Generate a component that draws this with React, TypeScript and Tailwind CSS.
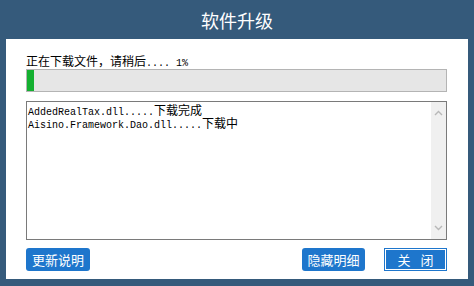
import React from 'react';

const cjk = '"Noto Sans CJK SC", "Liberation Sans", sans-serif';
const mono = '"Liberation Mono", monospace';

function Chevron({ up }: { up?: boolean }) {
  return (
    <svg width="9" height="6" viewBox="0 0 9 6" className="text-[#b8b8b8]">
      <path d={up ? 'M1 5 L4.5 1.5 L8 5' : 'M1 1 L4.5 4.5 L8 1'} fill="none" stroke="currentColor" strokeWidth="1.4" />
    </svg>
  );
}

export default function App() {
  const logs = [
    { file: 'AddedRealTax.dll', state: '下载完成' },
    { file: 'Aisino.Framework.Dao.dll', state: '下载中' },
  ];
  const progress = 1;

  return (
    <div className="w-[474px] h-[286px] bg-[#355a7b] flex flex-col" style={{ fontFamily: cjk }}>
      <div className="h-[39px] flex items-center justify-center text-white text-[18px] leading-none pt-[1px]">
        软件升级
      </div>
      <div className="mx-[6px] h-[240px] bg-white pl-[20px] pr-[21px] pt-[14px] flex flex-col">
        <div className="h-[16px] text-[12px] leading-[16px] text-black flex items-baseline whitespace-nowrap">
          <span>正在下载文件，请稍后</span>
          <span className="text-[10px]" style={{ fontFamily: mono }}>.... {progress}%</span>
        </div>
        <div className="h-[23px] border border-[#b4b4b4] bg-[#e6e6e6] flex">
          <div className="w-[7px] h-full bg-[#14b030]" />
        </div>
        <div className="mt-[9px] h-[139px] border border-[#7a7a7a] flex">
          <div className="flex-1 pl-[1px] pt-[3px] text-[10px] leading-[9.5px] text-black" style={{ fontFamily: mono }}>
            {logs.map((l) => (
              <div key={l.file} className="whitespace-nowrap">
                {l.file}.....<span className="text-[12px]" style={{ fontFamily: cjk }}>{l.state}</span>
              </div>
            ))}
          </div>
          <div className="w-[15px] bg-[#f0f0f0] flex flex-col items-center justify-between py-[8px]">
            <Chevron up />
            <Chevron />
          </div>
        </div>
        <div className="mt-[8px] h-[23px] flex items-stretch">
          <button className="w-[64px] h-[23px] rounded-[3px] bg-[#1e76cc] text-white text-[13px] leading-none flex items-center justify-center">更新说明</button>
          <div className="flex-1" />
          <button className="w-[63px] h-[23px] rounded-[3px] bg-[#1e76cc] text-white text-[13px] leading-none flex items-center justify-center">隐藏明细</button>
          <div className="ml-[19px] w-[63px] h-[23px] border border-[#1e76cc] p-[1px] bg-white flex">
            <button className="flex-1 bg-[#1e76cc] text-white text-[13px] leading-none flex items-center justify-center gap-[10px]">
              <span>关</span>
              <span>闭</span>
            </button>
          </div>
        </div>
      </div>
    </div>
  );
}
